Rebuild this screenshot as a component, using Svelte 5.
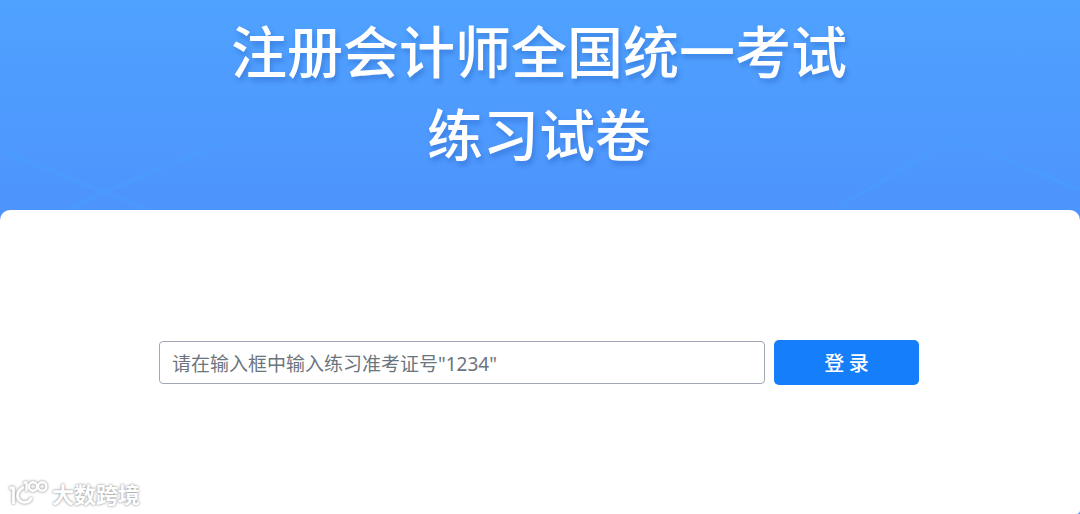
<script>
  let ticket = $state('');
</script>

<div class="page">
  <header>
    <svg class="pattern" viewBox="0 0 1080 80" preserveAspectRatio="none" aria-hidden="true">
      <path d="M0 20 L104 62 L148 80 M70 80 L104 62 L230 10 M840 76 L955 8 L1080 60" />
    </svg>
    <h1>注册会计师全国统一考试<br />练习试卷</h1>
  </header>
  <main>
    <form onsubmit={(e) => e.preventDefault()}>
      <input
        type="text"
        aria-label="准考证号"
        placeholder={'请在输入框中输入练习准考证号"1234"'}
        bind:value={ticket}
      />
      <button type="submit">登 录</button>
    </form>
    <div class="brand">
      <svg width="40" height="30" viewBox="0 0 40 30" aria-hidden="true">
        <g fill="none" stroke="#fff" stroke-width="2.8">
          <path d="M1.5 10 H5.5 V26" />
          <path d="M16 9 Q9.5 12 9.5 18 A7.2 7.2 0 0 0 23.5 19.5" />
          <path d="M15.5 4.5 H18.5 V13.5" stroke-width="2.4" />
          <circle cx="25" cy="8.5" r="4.2" stroke-width="2.4" />
          <circle cx="34.2" cy="8.5" r="4.2" stroke-width="2.4" />
        </g>
      </svg>
      <span>大数跨境</span>
    </div>
  </main>
</div>

<style>
  :global(body) {
    margin: 0;
    background: #4d94ff;
  }
  .page {
    min-height: 100vh;
    display: flex;
    flex-direction: column;
    font-family: 'Noto Sans', 'Noto Sans CJK SC', sans-serif;
    background: linear-gradient(#4fa2ff, #4d94fd 210px);
  }
  header {
    position: relative;
    padding: 7px 18px 37px 16px;
  }
  .pattern {
    position: absolute;
    left: 0;
    bottom: 0;
    width: 100%;
    height: 80px;
    fill: none;
    stroke: #46a8ff;
    stroke-opacity: 0.2;
    stroke-width: 4;
  }
  h1 {
    position: relative;
    margin: 0;
    text-align: center;
    color: #fff;
    font: 500 56px/83px 'Noto Sans CJK SC', sans-serif;
    text-shadow: 2px 4px 5px rgba(20, 70, 160, 0.3);
  }
  main {
    flex: 1;
    display: flex;
    flex-direction: column;
    justify-content: space-between;
    background: #fff;
    border-radius: 10px 10px 4px 0;
  }
  form {
    display: flex;
    align-items: center;
    justify-content: center;
    gap: 9px;
    width: 760px;
    max-width: 90%;
    margin: 0 auto;
    padding: 130px 2px 0 0;
  }
  input {
    flex: 1;
    min-width: 0;
    height: 43px;
    box-sizing: border-box;
    padding: 2px 12px 0;
    border: 1px solid #a3a8b8;
    border-radius: 4px;
    background: #fff;
    color: #333;
    font: 19px 'Noto Sans', 'Noto Sans CJK SC', sans-serif;
  }
  input::placeholder {
    color: #6c757d;
    opacity: 1;
  }
  button {
    width: 145px;
    height: 45px;
    border: 0;
    border-radius: 5px;
    background: #157efb;
    color: #fff;
    font: 500 20px 'Noto Sans CJK SC', sans-serif;
  }
  .brand {
    display: flex;
    align-items: center;
    gap: 4px;
    padding: 0 8px 6px;
    color: #fff;
    font: bold 22px/30px 'Noto Sans CJK SC', sans-serif;
    text-shadow: 0 0 2px #999, 0 0 3px #bbb;
  }
  .brand svg {
    filter: drop-shadow(0 0 1px #aaa) drop-shadow(0 0 1px #ccc);
  }
</style>
